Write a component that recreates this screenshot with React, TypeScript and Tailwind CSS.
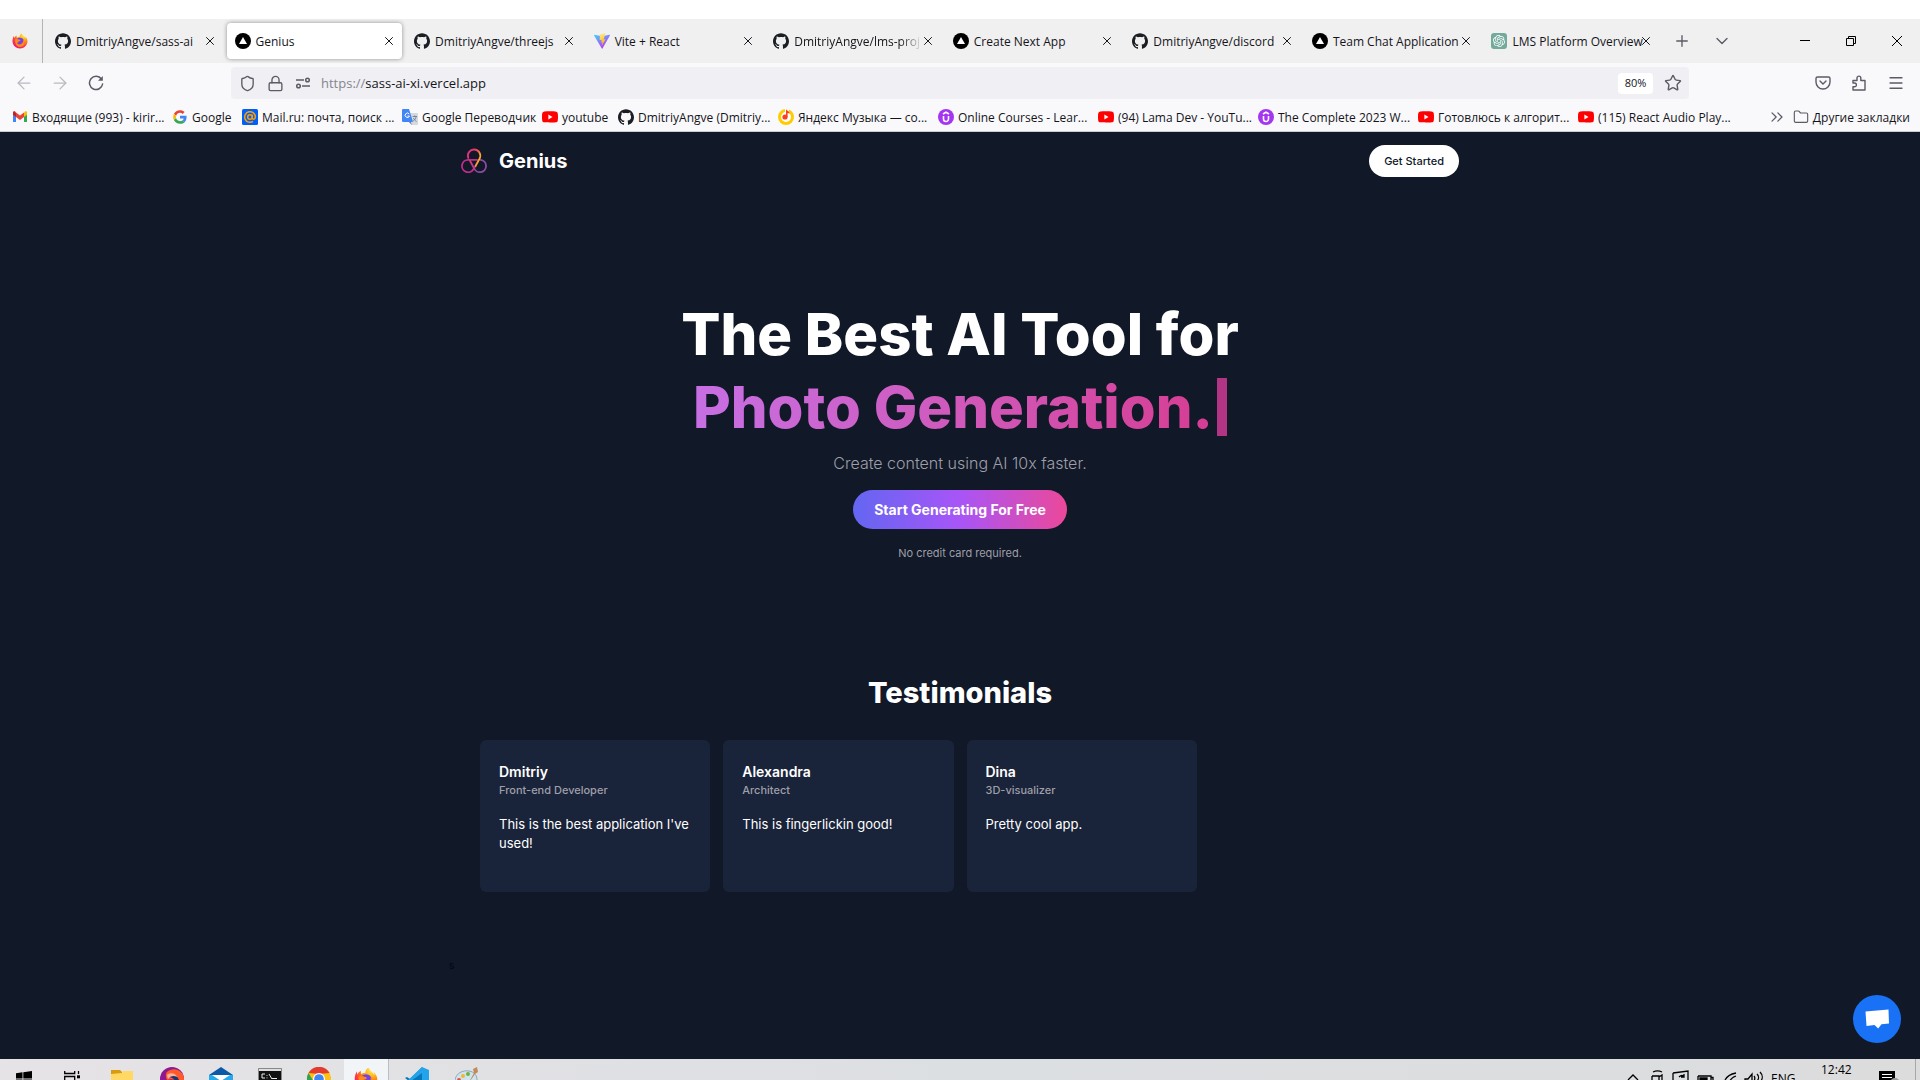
import React from "react";
import { SiGithub, SiYoutube, SiOpenai } from "react-icons/si";
import { ArrowLeft, ArrowRight, ChevronDown, ChevronsRight, Folder, Lock, Menu, Plus, Shield, Star, X } from "lucide-react";

type IconName = "firefox" | "github" | "vercel" | "vite" | "openai" | "gmail" | "google" | "mailru" | "translate" | "youtube" | "yandex" | "udemy";

function FirefoxLogo({ className }: { className?: string }) {
  return (
    <svg viewBox="0 0 32 32" className={className} aria-hidden="true">
      <defs>
        <radialGradient id="fx" cx="0.75" cy="0.1" r="1">
          <stop offset="0" stopColor="#fff44f" />
          <stop offset="0.4" stopColor="#ff980e" />
          <stop offset="0.75" stopColor="#ff3647" />
          <stop offset="1" stopColor="#e31587" />
        </radialGradient>
      </defs>
      <path d="M29.5 11c-.8-2-2.4-4-3.7-4.700 1 2 1.600 4 1.700 5C25 6.500 21.500 5 19 1c-3 1.700-4 5-4 7-2-.3-4 .4-5 1.500-1-1-1-3-.7-4.500C7 6 5 8.500 4.500 10c-.7-.8-.6-3-.6-4C2 8 .8 13 1 17c.5 8 7 14 15 14 8.500 0 15-7 15-15 0-2-.5-3.500-1.500-5z" fill="url(#fx)" />
      <circle cx="16" cy="17" r="7.500" fill="#7542e5" />
      <path d="M6 13c3-2 6-1 8 0 2 .3 3 1 3 2s-2 1.500-4 2c0 2-2 3-3 2.500 1 3 4 4 7 3 4-1 6-5 5-9 3 2 4 6 2 10-3 5-10 6-14 2-3-3-4-8-4-12.500z" fill="#ff8a16" />
    </svg>
  );
}

function VercelLogo() {
  return (
    <svg viewBox="0 0 16 16" className="size-4" aria-hidden="true">
      <circle cx="8" cy="8" r="8" />
      <path d="M8 4l4 7H4z" fill="#fff" />
    </svg>
  );
}

function SiteIcon({ name }: { name: IconName }) {
  switch (name) {
    case "firefox":
      return <FirefoxLogo className="size-4" />;
    case "github":
      return <SiGithub className="size-4 text-[#1b1f23]" aria-hidden="true" />;
    case "vercel":
      return <VercelLogo />;
    case "youtube":
      return <SiYoutube className="size-4 text-[#ff0000]" aria-hidden="true" />;
    case "openai":
      return (
        <span className="flex size-4 items-center justify-center rounded-[3px] bg-[#74aa9c]">
          <SiOpenai className="size-3 text-white" aria-hidden="true" />
        </span>
      );
    case "vite":
      return (
        <svg viewBox="0 0 32 32" className="size-4" aria-hidden="true">
          <defs>
            <linearGradient id="va" x1="0" y1="0" x2="0.6" y2="1">
              <stop offset="0" stopColor="#41d1ff" />
              <stop offset="1" stopColor="#bd34fe" />
            </linearGradient>
            <linearGradient id="vb" x1="0.4" y1="0" x2="0.6" y2="1">
              <stop offset="0" stopColor="#ffea83" />
              <stop offset="1" stopColor="#ffa800" />
            </linearGradient>
          </defs>
          <path d="M31.800 4.800L17 31.200a.8.8 0 0 1-1.400 0L.2 4.800a.8.8 0 0 1 .9-1.200L16 6.300l14.900-2.700a.8.800 0 0 1 .9 1.200z" fill="url(#va)" />
          <path d="M23 .5L12 2.700l-.7 11.800 4-.8-1 5.300 2.500-.6-1.500 7.600 8-13.600-4 .7z" fill="url(#vb)" />
        </svg>
      );
    case "gmail":
      return (
        <svg viewBox="0 0 16 16" className="size-4" aria-hidden="true">
          <path d="M1 3.500V13h3V6z" fill="#4285f4" />
          <path d="M15 3.500V13h-3V6z" fill="#34a853" />
          <path d="M12 4v4l3-2.300V3.600C15 2.300 13.500 2 12.600 2.800z" fill="#fbbc04" />
          <path d="M4 4v4L1 5.700V3.600C1 2.300 2.500 2 3.400 2.800z" fill="#c5221f" />
          <path d="M4 8V3.500l4 3 4-3V8l-4 3z" fill="#ea4335" />
        </svg>
      );
    case "google":
      return (
        <svg viewBox="-4 -4 56 56" className="size-4" aria-hidden="true">
          <path fill="#EA4335" d="M24 9.500c3.500 0 6.700 1.200 9.200 3.600l6.900-6.900C35.900 2.400 30.500 0 24 0 14.600 0 6.500 5.400 2.600 13.200l8 6.200C12.400 13.700 17.700 9.500 24 9.500z" />
          <path fill="#4285F4" d="M47 24.500c0-1.600-.2-3.100-.4-4.500H24v9h12.900c-.6 3-2.300 5.500-4.800 7.200l7.700 6C44.400 38 47 31.800 47 24.500z" />
          <path fill="#FBBC05" d="M10.500 28.600A14.500 14.500 0 0 1 9.800 24c0-1.600.3-3.200.8-4.600l-8-6.200A24 24 0 0 0 0 24c0 3.900.9 7.500 2.600 10.800z" />
          <path fill="#34A853" d="M24 48c6.500 0 11.900-2.100 15.900-5.800l-7.700-6c-2.200 1.400-4.900 2.300-8.200 2.300-6.300 0-11.600-4.200-13.500-9.900l-8 6.200C6.500 42.600 14.600 48 24 48z" />
        </svg>
      );
    case "mailru":
      return (
        <svg viewBox="0 0 16 16" className="size-4" aria-hidden="true">
          <rect width="16" height="16" rx="1.500" fill="#005ff9" />
          <circle cx="8" cy="8" r="2.300" fill="none" stroke="#ff9e00" strokeWidth="1.500" />
          <path d="M10.300 5.700V9c0 1.800 3 1.500 3-1A5.300 5.300 0 1 0 11 12.400" fill="none" stroke="#ff9e00" strokeWidth="1.500" />
        </svg>
      );
    case "translate":
      return (
        <svg viewBox="0 0 16 16" className="size-4" aria-hidden="true">
          <path d="M6 4h9a1 1 0 0 1 1 1v10a1 1 0 0 1-1 1H9z" fill="#d5d8dc" />
          <path d="M8 12l2 4-3-3z" fill="#3b5ba9" />
          <path d="M1 0h6l4 13H1a1 1 0 0 1-1-1V1a1 1 0 0 1 1-1z" fill="#4285f4" />
          <path d="M7.200 5A2.200 2.200 0 1 0 7.500 7H5.500" fill="none" stroke="#fff" strokeWidth="1" />
          <path d="M10.500 7.500h4.500M12.700 6.500v1M14.200 7.500c-.5 2.500-2 4-3 4.500M11.500 9c.5 1.500 1.700 2.700 3 3.500" fill="none" stroke="#607988" strokeWidth=".8" />
        </svg>
      );
    case "yandex":
      return (
        <svg viewBox="0 0 16 16" className="size-4" aria-hidden="true">
          <circle cx="8" cy="8" r="6.500" fill="#fff" stroke="#ffcc00" strokeWidth="3" />
          <path d="M7 0h4v4H7z" fill="#fff" />
          <circle cx="7" cy="8" r="2.600" fill="#ff3d23" />
          <path d="M8 8V0c1 2 3.500 2 3.500 4.500L9.600 4v4z" fill="#ff3d23" />
        </svg>
      );
    case "udemy":
      return (
        <svg viewBox="0 0 16 16" className="size-4" aria-hidden="true">
          <circle cx="8" cy="8" r="8" fill="#a435f0" />
          <path d="M5.500 7v3a2.500 2.500 0 0 0 5 0V7M5 5l3-1.800L11 5" fill="none" stroke="#fff" strokeWidth="1.600" />
        </svg>
      );
  }
}

const tabs: { icon: IconName; title: string; active?: boolean; faded?: boolean }[] = [
  { icon: "github", title: "DmitriyAngve/sass-ai" },
  { icon: "vercel", title: "Genius", active: true },
  { icon: "github", title: "DmitriyAngve/threejs" },
  { icon: "vite", title: "Vite + React" },
  { icon: "github", title: "DmitriyAngve/lms-proj", faded: true },
  { icon: "vercel", title: "Create Next App" },
  { icon: "github", title: "DmitriyAngve/discord" },
  { icon: "vercel", title: "Team Chat Application" },
  { icon: "openai", title: "LMS Platform Overview" },
];

const bookmarks: { icon: IconName; title: string; width: string }[] = [
  { icon: "gmail", title: "Входящие (993) - kirir...", width: "w-40" },
  { icon: "google", title: "Google", width: "w-[70px]" },
  { icon: "mailru", title: "Mail.ru: почта, поиск ...", width: "w-40" },
  { icon: "translate", title: "Google Переводчик", width: "w-[140px]" },
  { icon: "youtube", title: "youtube", width: "w-[76px]" },
  { icon: "github", title: "DmitriyAngve (Dmitriy...", width: "w-40" },
  { icon: "yandex", title: "Яндекс Музыка — со...", width: "w-40" },
  { icon: "udemy", title: "Online Courses - Lear...", width: "w-40" },
  { icon: "youtube", title: "(94) Lama Dev - YouTu...", width: "w-40" },
  { icon: "udemy", title: "The Complete 2023 W...", width: "w-40" },
  { icon: "youtube", title: "Готовлюсь к алгорит...", width: "w-40" },
  { icon: "youtube", title: "(115) React Audio Play...", width: "w-40" },
];

const testimonials = [
  { name: "Dmitriy", role: "Front-end Developer", text: "This is the best application I've used!" },
  { name: "Alexandra", role: "Architect", text: "This is fingerlickin good!" },
  { name: "Dina", role: "3D-visualizer", text: "Pretty cool app." },
];

function TabStrip() {
  return (
    <div className="flex h-11 items-center bg-[#f0f0f0]">
      <button aria-label="Firefox View" className="flex h-11 w-[43px] items-center border-r border-[#b4b4b4] pl-3">
        <SiteIcon name="firefox" />
      </button>
      <div role="tablist" className="ml-1 grid min-w-0 flex-1 grid-cols-9 gap-1">
        {tabs.map((t) => (
          <div
            key={t.title}
            className={
              t.active
                ? "flex h-9 min-w-0 items-center rounded bg-white pr-1.5 pl-2 shadow-[0_0_4px_rgba(0,0,0,0.4)]"
                : "flex h-9 min-w-0 items-center pr-1.5 pl-2"
            }
          >
            <button role="tab" aria-selected={!!t.active} className="flex min-w-0 flex-1 items-center gap-[5px] text-left">
              <span className="shrink-0"><SiteIcon name={t.icon} /></span>
              <span
                className={
                  t.faded
                    ? "pt-0.5 whitespace-nowrap [mask-image:linear-gradient(to_left,rgba(0,0,0,0.1),black_20px)]"
                    : "pt-0.5 whitespace-nowrap"
                }
              >
                {t.title}
              </span>
            </button>
            <button aria-label={"Close " + t.title} className="shrink-0">
              <X className="size-3.5" strokeWidth={1.700} />
            </button>
          </div>
        ))}
      </div>
      <div className="flex w-[261px] shrink-0 items-center text-[#5b5b66]">
        <button aria-label="New tab" className="ml-[14px]"><Plus className="size-[18px]" strokeWidth={1.800} /></button>
        <button aria-label="List all tabs" className="ml-[21px]"><ChevronDown className="size-5" strokeWidth={1.600} /></button>
        <div className="ml-auto flex items-center text-black">
          <button aria-label="Minimize" className="flex w-[46px] justify-center"><svg viewBox="0 0 12 12" className="size-3"><path d="M1 5.500h10" stroke="currentColor" /></svg></button>
          <button aria-label="Restore" className="flex w-[46px] justify-center">
            <svg viewBox="0 0 12 12" className="size-3" fill="none" stroke="currentColor"><path d="M1.500 3.500h7v7h-7zM3.500 3.500v-2h7v7h-2" /></svg>
          </button>
          <button aria-label="Close window" className="flex w-[46px] justify-center"><svg viewBox="0 0 12 12" className="size-3"><path d="M1 1l10 10M11 1L1 11" stroke="currentColor" /></svg></button>
        </div>
      </div>
    </div>
  );
}

function NavBar() {
  return (
    <div className="flex h-10 items-center bg-[#f9f9fb] text-[#5b5b66]">
      <div className="flex w-[231px] shrink-0 items-center gap-4 pl-3.5">
        <button aria-label="Back" className="text-[#b9b9c0]"><ArrowLeft className="size-5" strokeWidth={1.500} /></button>
        <button aria-label="Forward" className="text-[#b9b9c0]"><ArrowRight className="size-5" strokeWidth={1.500} /></button>
        <button aria-label="Reload" className="ml-0.5">
          <svg viewBox="0 0 16 16" className="size-4" fill="none" stroke="currentColor" strokeWidth="1.500" strokeLinecap="round">
            <path d="M13.500 4.200A6.600 6.600 0 1 0 14.600 9" />
            <path d="M14.800 1v4.800H10z" fill="currentColor" stroke="none" />
          </svg>
        </button>
      </div>
      <div className="flex h-8 min-w-0 flex-1 items-center rounded bg-[#f0f0f4] pl-2">
        <Shield className="size-[17px]" strokeWidth={1.900} />
        <Lock className="ml-[11px] size-[17px]" strokeWidth={1.900} />
        <svg viewBox="0 0 16 16" className="ml-[11px] size-4" fill="none" stroke="currentColor" strokeWidth="1.500" aria-hidden="true">
          <path d="M1 5h8M7 11h8" /><circle cx="12.500" cy="5" r="1.800" /><circle cx="3.500" cy="11" r="1.800" />
        </svg>
        <div aria-label="Address" className="ml-2.5 flex-1 pt-0.5 text-[13px] whitespace-nowrap text-[#85858d]">
          https://<span className="text-[#15141a]">sass-ai-xi.vercel.app</span>
        </div>
        <button className="h-[21px] w-[35px] rounded bg-white text-center text-[11px] text-[#15141a]">80%</button>
        <button aria-label="Bookmark this page" className="mr-[7px] ml-[11px]"><Star className="size-[18px]" strokeWidth={1.900} /></button>
      </div>
      <div className="flex w-[231px] shrink-0 items-center justify-end gap-5 pr-[15px]">
        <button aria-label="Save to Pocket">
          <svg viewBox="0 0 16 16" className="size-4" fill="none" stroke="currentColor" strokeWidth="1.400" strokeLinecap="round"><path d="M2.500 2h11A1.500 1.500 0 0 1 15 3.500V7A7 7 0 0 1 1 7V3.500A1.500 1.500 0 0 1 2.500 2zM5 6l3 3 3-3" /></svg>
        </button>
        <button aria-label="Extensions">
          <svg viewBox="0 0 16 16" className="size-4" fill="none" stroke="currentColor" strokeWidth="1.400" strokeLinejoin="round">
            <path d="M2 8V5.500h4V3a1.900 1.900 0 0 1 3.800 0v2.500H14V15H2v-3.200h1.500a1.900 1.900 0 0 0 0-3.800z" />
          </svg>
        </button>
        <button aria-label="Application menu"><Menu className="size-[18px]" strokeWidth={1.700} /></button>
      </div>
    </div>
  );
}

function BookmarkBar() {
  return (
    <nav aria-label="Bookmarks" className="flex h-[29px] items-center border-b border-[#cccccc] bg-[#f9f9fb] pl-3 text-[#15141a]">
      {bookmarks.map((b) => (
        <a key={b.title} href="#" className={"flex shrink-0 items-center gap-1 whitespace-nowrap " + b.width}>
          <SiteIcon name={b.icon} />
          <span className="pt-0.5">{b.title}</span>
        </a>
      ))}
      <button aria-label="More bookmarks" className="ml-auto text-[#5b5b66]"><ChevronsRight className="size-5" strokeWidth={1.500} /></button>
      <a href="#" className="mr-2.5 ml-1.5 flex items-center gap-1 whitespace-nowrap">
        <Folder className="size-4 text-[#5b5b66]" strokeWidth={1.700} />
        <span className="pt-0.5">Другие закладки</span>
      </a>
    </nav>
  );
}

function GeniusLogo() {
  return (
    <svg viewBox="0 0 26 26" className="size-[26px]" fill="none" strokeWidth="1.800" strokeLinecap="round" aria-hidden="true">
      <defs>
        <linearGradient id="g1" x1="0" y1="0" x2="1" y2="0.500">
          <stop offset="0" stopColor="#d92d8a" /><stop offset="0.600" stopColor="#f0415f" /><stop offset="1" stopColor="#fdb52a" />
        </linearGradient>
        <linearGradient id="g2" x1="0" y1="0" x2="1" y2="0">
          <stop offset="0" stopColor="#e0357c" /><stop offset="0.400" stopColor="#8d4aa5" />
        </linearGradient>
      </defs>
      <path d="M16 11.800H7.200a6.200 6.200 0 1 0 5.400 9.200L14.500 18" stroke="#c22b90" />
      <path d="M19.500 11.800a6.200 6.200 0 1 1-6.500 8.200L9 12.800" stroke="url(#g2)" />
      <path d="M7.300 10A6.200 6.200 0 1 1 18.600 10.500L14.500 18" stroke="url(#g1)" />
    </svg>
  );
}

function Landing() {
  return (
    <main className="relative flex-1 bg-[#111827] font-[Inter,sans-serif]">
      <div className="mx-auto max-w-[1024px]">
        <nav className="flex items-center justify-between p-[13px]">
          <a href="#" className="flex items-center gap-3 text-xl font-bold text-white">
            <GeniusLogo />
            Genius
          </a>
          <button className="h-8 rounded-full bg-white px-[15px] text-[11px] font-medium text-[#0f172a]">Get Started</button>
        </nav>

        <section className="flex flex-col items-center pt-[115px] text-center">
          <h1 className="text-[58px] leading-[58px] font-extrabold text-white">
            The Best AI Tool for
            <span className="mt-[15px] block">
              <span className="bg-linear-to-r from-[#c76fe4] to-[#d63c93] bg-clip-text text-transparent">Photo Generation.</span>
              <span className="ml-1 inline-block h-[58px] w-2.5 bg-[#b13584] align-bottom" />
            </span>
          </h1>
          <p className="mt-4 text-base leading-[22px] font-light text-zinc-400">Create content using AI 10x faster.</p>
          <button className="mt-4 h-[39px] rounded-full bg-linear-to-r/srgb from-[#6366f1] via-[#a855f7] to-[#ec4899] px-[21px] text-sm font-bold text-white">
            Start Generating For Free
          </button>
          <p className="mt-4 text-[11px] leading-4 text-zinc-400">No credit card required.</p>
        </section>

        <section className="px-8 pt-[116px]">
          <h2 className="text-center text-[29px] leading-8 font-extrabold text-white">Testimonials</h2>
          <div className="mt-[31px] grid grid-cols-4 gap-[13px]">
            {testimonials.map((t) => (
              <article key={t.name} className="h-[152px] rounded-md bg-[#192339] px-[19px] pt-[22px] text-white">
                <h3 className="text-sm leading-[19px] font-semibold">{t.name}</h3>
                <p className="text-[11px] leading-[19px] font-medium text-zinc-400">{t.role}</p>
                <p className="mt-[15px] text-[13px] leading-[19px]">{t.text}</p>
              </article>
            ))}
          </div>
        </section>
        <p className="mt-[65px] pl-px text-[10px] leading-4 text-[#020617]">s</p>
      </div>
      <button aria-label="Open chat" className="absolute right-[19px] bottom-4 flex size-12 items-center justify-center rounded-full bg-[#1972f5]">
        <svg viewBox="0 0 24 20" className="h-5 w-6" fill="#fff"><path d="M.5 2.500L23.500.5l.5 14-7.500.7-3.300 4.300-3.700-3.500L1.500 17z" /></svg>
      </button>
    </main>
  );
}

function Taskbar() {
  return (
    <footer className="flex h-[21px] items-start overflow-hidden bg-linear-to-r from-[#e6e3e6] via-[#dcdfe2] to-[#dcdcdd] text-black">
      <div className="flex h-full">
        <button aria-label="Start" className="flex w-12 justify-center pt-3">
          <svg viewBox="0 0 16 16" className="size-4"><path d="M0 2.200L6.500 1.300V7.600H0zM7.300 1.200L16 0v7.600H7.300zM0 8.400h6.500v6.300L0 13.800zM7.300 8.400H16V16l-8.700-1.200z" /></svg>
        </button>
        <button aria-label="Task view" className="flex w-12 justify-center pt-3">
          <svg viewBox="0 0 16 16" className="size-4" fill="none" stroke="#000" strokeWidth="1.300"><path d="M.7 0v2.500h10V0M.7 16V5.500h10V16M14.500 0v3M14.500 9v7" /><path d="M13 4.300h3v3h-3z" fill="#000" stroke="none" /></svg>
        </button>
        <button aria-label="File Explorer" className="flex w-[52px] justify-center pt-[10px]">
          <svg viewBox="0 0 24 24" className="size-6"><path d="M1 1h9l2 2v5H1z" fill="#d99a0b" /><path d="M1 5l11-1 1-2h10v19H1z" fill="#ffd866" /><path d="M4 11h16v9H4z" fill="#9aa27a" /></svg>
        </button>
        <button aria-label="Firefox Nightly" className="flex w-12 justify-center pt-2">
          <svg viewBox="0 0 24 24" className="size-6"><circle cx="12" cy="12" r="12" fill="#8d1a8f" /><path d="M7 5C13-1 24 3 24 12c0 7-8 11-9 11 5-7 0-13-8-10C5 9 6 6 7 5z" fill="#ff5a2e" /><path d="M8 10c4-4 9-2 11 3 0 3-2 5-4 6 1-6-2-9-7-9z" fill="#23356f" /><path d="M7 8c3-3 9-2 10 2-3-2-7-1-9 2z" fill="#ffb199" /></svg>
        </button>
        <button aria-label="Mail" className="flex w-[49px] justify-center pt-2">
          <svg viewBox="0 0 24 24" className="size-6"><path d="M0 8l12-8 12 8z" fill="#0a5aa8" /><path d="M0 8h24v14H0z" fill="#2aa9ea" /><path d="M3 8h18l-9 6z" fill="#fff" /></svg>
        </button>
        <button aria-label="Terminal" className="flex w-[49px] justify-center pt-[9px]">
          <svg viewBox="0 0 24 20" className="h-5 w-6"><path d="M.5.500h23v19H.5z" fill="#111" stroke="#888" /><path d="M1 1h22v2H1z" fill="#ddd" /><path d="M7 6H4v4h3M9 7v.8M9 9.500v.8M11 6l3 5M14 10.500h5" fill="none" stroke="#eee" /></svg>
        </button>
        <button aria-label="Google Chrome" className="flex w-[50px] justify-center pt-2">
          <svg viewBox="0 0 24 24" className="size-6"><circle cx="12" cy="12" r="12" fill="#fbc116" /><path d="M1.500 6A12 12 0 0 1 22.500 6L12 7z" fill="#e33b2e" /><path d="M1.500 6A12 12 0 0 0 12 24l-5-9z" fill="#31a350" /><circle cx="12" cy="12" r="6" fill="#fff" /><circle cx="12" cy="12" r="4.800" fill="#4285f4" /></svg>
        </button>
        <button aria-label="Firefox" className="flex w-[45px] justify-center border-r border-[#b8c0c4] bg-[#f1f5f8] pt-2">
          <FirefoxLogo className="size-6" />
        </button>
        <button aria-label="Visual Studio Code" className="flex w-[55px] justify-center pt-2">
          <svg viewBox="0 0 24 24" className="size-6"><path d="M17 0L5 12l-3-2-2 1 17 13z" fill="#0877b9" /><path d="M17 0l7 3v18l-7 3zM17 6L2 17l-2-1L17 0z" fill="#23a3ea" /></svg>
        </button>
        <button aria-label="Paint" className="flex w-[45px] justify-center pt-2">
          <svg viewBox="0 0 24 24" className="size-6"><path d="M0 13C1 6 8 3 14 4s8 5 8 9-5 3-7 5 1 5-4 5S-.500 20 0 13z" fill="#cfe3ee" stroke="#86a9bc" /><circle cx="8" cy="9" r="2" fill="#f2b632" /><circle cx="4" cy="13" r="2" fill="#e5533d" /><circle cx="13" cy="7" r="2" fill="#6cb33f" /><path d="M13 17L19 6l-1-4 4-2 1 5-3 2z" fill="#c08a5a" /></svg>
        </button>
      </div>
      <div className="ml-auto flex h-full items-start text-xs leading-[15px]">
        <svg viewBox="15 0 156 21" className="h-[21px] w-[156px]" fill="none" stroke="#000" strokeWidth="1.300" aria-hidden="true">
          <path d="M28 21l5-5 5 5" />
          <path d="M53 13c3-1.500 6-1.500 9 0M52 17h7v6M52 17v6M59 18l3-2v7" />
          <path d="M73 14l15-2v12M73 14v10M79 18c2-2 4-2 5 0M84 15v3h-3" />
          <path d="M98 17h13v6M98 17v6M111 18.500h2v4" /><path d="M100 19h7v4h-7z" fill="#000" />
          <path d="M125 21c2-4 6-6 11-7M130 22c1-3 3-4 6-5" />
          <path d="M145 24v-4h3l4-5v9M154 17c1 1 1 3 0 5M157 15c2 2 2 5 0 7M160 13c3 3 3 7 0 10" />
        </svg>
        <span className="w-[50px] pt-3">ENG</span>
        <time className="w-[58px] pt-[3px]">12:42</time>
        <button aria-label="Notifications" className="w-9 pt-3">
          <svg viewBox="0 0 20 16" className="h-4 w-5"><path d="M0 0h16v13H0z" /><path d="M3 3.500h10M3 6.500h10" stroke="#fff" /><circle cx="16" cy="12" r="5" fill="#9a9a9a" /></svg>
        </button>
        <div className="h-full w-[5px] border-l border-[#a8a8a8]" />
      </div>
    </footer>
  );
}

export default function App() {
  return (
    <div className="flex min-h-screen flex-col bg-white pt-[19px] font-['Open_Sans',sans-serif] text-[12px] text-[#15141a]">
      <header>
        <TabStrip />
        <NavBar />
        <BookmarkBar />
      </header>
      <Landing />
      <Taskbar />
    </div>
  );
}
